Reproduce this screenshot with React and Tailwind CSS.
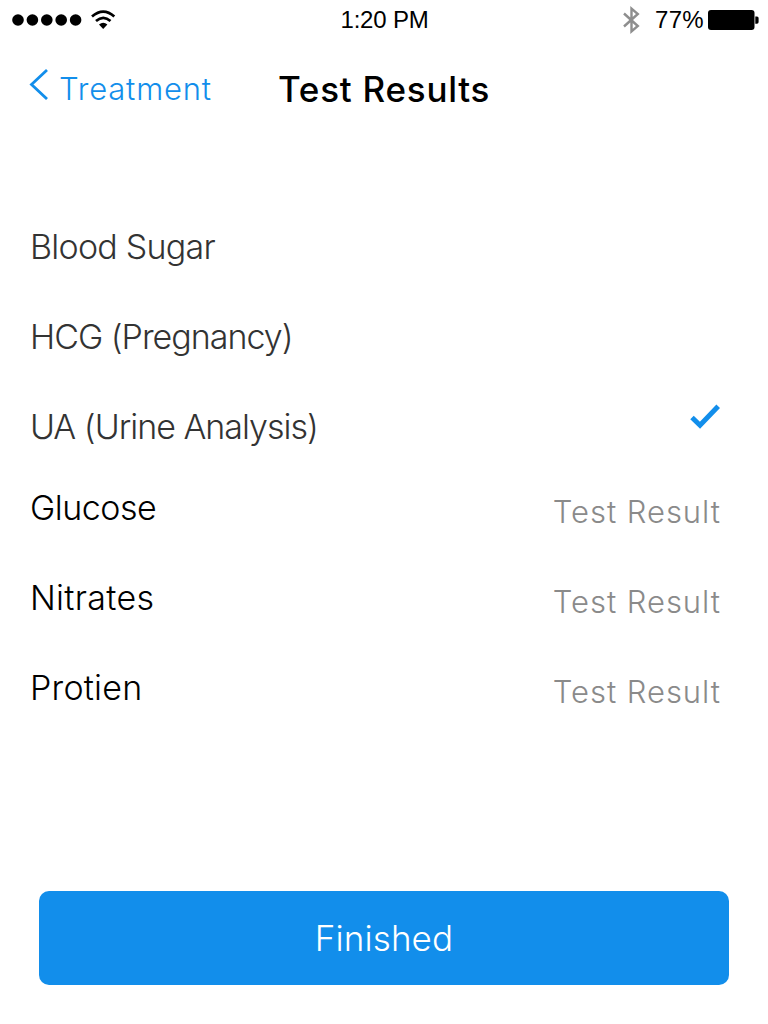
const tests = ["Blood Sugar", "HCG (Pregnancy)", "UA (Urine Analysis)"];
const results = ["Glucose", "Nitrates", "Protien"];
const tracking = {
  "Blood Sugar": "tracking-[-0.75px]",
  "HCG (Pregnancy)": "tracking-[-1px]",
  "UA (Urine Analysis)": "tracking-[-1px]",
  Glucose: "tracking-[-0.5px]",
  Nitrates: "tracking-[0.3px]",
  Protien: "tracking-[0.2px]",
};

function StatusBar() {
  return (
    <header className="grid h-10 grid-cols-3 items-center pl-3 pr-[9px] font-['Liberation_Sans',sans-serif] text-[24px] font-normal leading-10 text-black">
      <div className="flex items-center">
        <svg width="70" height="12" viewBox="0 0 70 12">
          {[6, 20.4, 34.8, 49.2, 63.6].map((x) => (
            <circle key={x} cx={x} cy="6" r="5.8" />
          ))}
        </svg>
        <svg className="ml-[9px]" width="25" height="20" viewBox="0 0 25 20" fill="none" stroke="#000" strokeWidth="2.7">
          <path d="M1 6.6Q12.3-3.2 23.3 6.6" />
          <path d="M5 11.1Q12.3 4.7 19.5 11.1" />
          <path d="M8 14.5Q12.2 10.8 16.4 14.5L12.2 19Z" fill="#000" stroke="none" />
        </svg>
      </div>
      <span className="pr-[2px] text-center tracking-[-0.2px]">1:20 PM</span>
      <div className="flex items-center justify-end">
        <svg width="18" height="28" viewBox="0 0 18 28" fill="none" stroke="#8e8e8e" strokeWidth="2.4">
          <path d="M1 7.5L14.8 20L8.5 25.3V2.7L14.8 8L1 20.5" />
        </svg>
        <span className="ml-[14px] tracking-[0.3px]">77%</span>
        <svg className="ml-1" width="51" height="20" viewBox="0 0 51 20">
          <rect width="46.5" height="20" rx="3" />
          <path d="M47.3 6.5H49a1.6 1.6 0 0 1 1.6 1.6v4a1.6 1.6 0 0 1-1.6 1.6H47.3Z" />
        </svg>
      </div>
    </header>
  );
}

export default function App() {
  return (
    <main className="flex h-[1024px] w-[768px] flex-col overflow-hidden bg-white font-['Inter',sans-serif] font-[350]">
      <StatusBar />
      <nav className="flex h-[162px] items-start">
        <button className="flex w-[278px] items-start pl-[29px] text-[31px] leading-10 text-[#128eeb]">
          <svg className="mt-7 shrink-0" width="20" height="32" viewBox="0 0 20 32" fill="none" stroke="currentColor" strokeWidth="2.8">
            <path d="M18 2L2.5 16.5L18 31" />
          </svg>
          <span className="ml-[10px] mt-[29px] tracking-[0.8px]">Treatment</span>
        </button>
        <h1 className="mt-[29px] whitespace-nowrap text-[35px] font-medium leading-10 tracking-[0.75px] text-black">Test Results</h1>
      </nav>
      <ul className="h-[261px] pl-[30px] pr-12 text-[34px] text-[#333]">
        {tests.map((name, i) => (
          <li key={name} className="flex h-[90px] justify-between leading-[90px]">
            <span className={tracking[name]}>{name}</span>
            {i === 2 && (
              <svg className="mt-[22px]" width="30" height="26" viewBox="0 0 30 26" fill="none" stroke="#128eeb" strokeWidth="5">
                <path d="M2 13.5L10 21.2L28.2 2.2" />
              </svg>
            )}
          </li>
        ))}
      </ul>
      <ul className="pl-[30px] pr-[47px] text-[34px] text-black">
        {results.map((name) => (
          <li key={name} className="flex h-[90px] justify-between leading-[90px]">
            <span className={tracking[name]}>{name}</span>
            <span className="pt-1 text-[31px] tracking-[0.95px] text-[#8a8a8a]">Test Result</span>
          </li>
        ))}
      </ul>
      <button className="mx-[39px] mb-[39.5px] mt-auto h-[94px] shrink-0 rounded-[10px] bg-[#128eeb] text-[35px] leading-[94px] tracking-[0.1px] text-white">
        Finished
      </button>
    </main>
  );
}
